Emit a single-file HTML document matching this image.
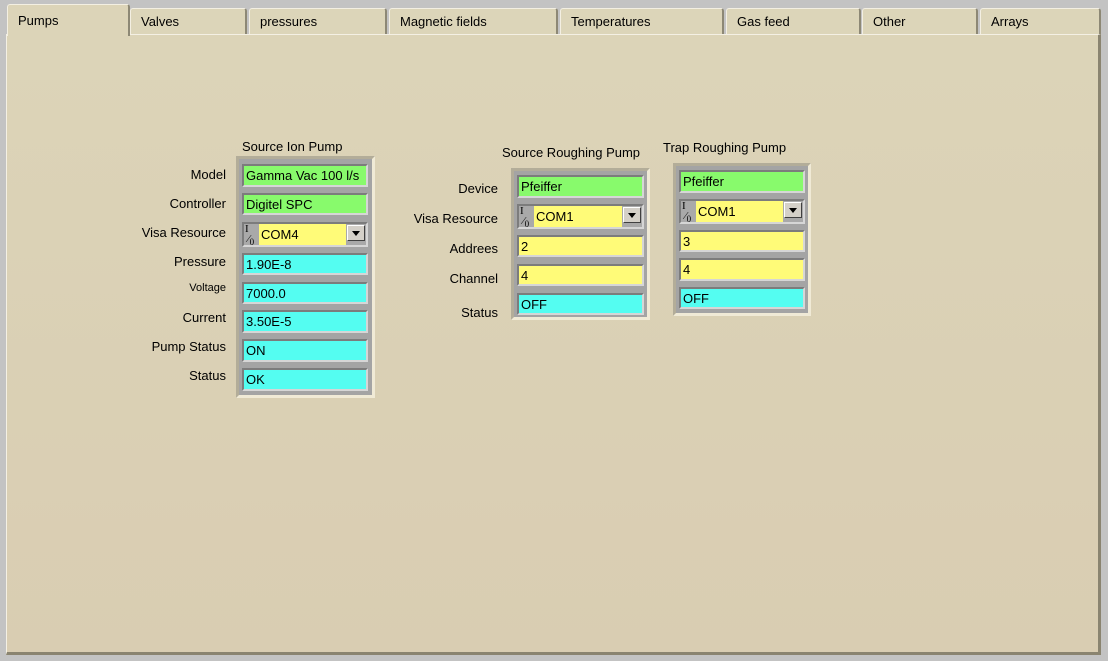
<!DOCTYPE html>
<html><head><style>
body{margin:0;width:1108px;height:661px;background:#c3c3c3;position:relative;overflow:hidden;font-family:"Liberation Sans",sans-serif;font-size:13px;color:#000}
.panel{position:absolute;left:6px;top:34px;width:1091px;height:617px;background:linear-gradient(180deg,#dcd4b8,#d9cdb2);border-top:1px solid #f4f0e4;border-left:1px solid #f4f0e4;border-right:3px solid #8a8470;border-bottom:3px solid #8a8470}
.tab{position:absolute;top:8px;height:26px;background:#dcd5b9;border:1px solid #f3efe2;border-right:2px solid #8d8875;border-bottom:none;border-radius:3px 3px 0 0;box-sizing:border-box;padding:5px 0 0 10px}
.tab.sel{top:4px;height:32px;background:#dcd4b8;padding-top:8px;z-index:2;border-bottom:none}
.lbl{position:absolute;text-align:right;width:120px}
.title{position:absolute}
.box{position:absolute;background:#a4a4a4;border:3px solid;border-color:#b3ad99 #f0ead6 #f0ead6 #b3ad99}
.f{position:absolute;box-sizing:border-box;border:2px solid;border-color:#7c7c7c #d6d6d6 #d6d6d6 #7c7c7c;padding:3px 0 0 2px;line-height:14px;white-space:nowrap}
.g{background:#88fa6c}.y{background:#fffb78}.c{background:#54fdf1}
.io{position:absolute;box-sizing:border-box;border:2px solid;border-color:#7c7c7c #d6d6d6 #d6d6d6 #7c7c7c;background:#a9a9a9}
.io .t{position:absolute;left:15px;top:0;bottom:0;right:20px;background:#fffb78;padding:3px 0 0 2px}
.io .s{position:absolute;left:1px;top:0;font-family:"Liberation Serif",serif;font-size:11px;line-height:10px}
.io .b{position:absolute;right:1px;top:1px;width:18px;height:16px;background:#d4d0c8;border:1px solid;border-color:#fff #404040 #404040 #fff;box-sizing:border-box}
.io .b:after{content:"";position:absolute;left:4px;top:5px;border-left:4px solid transparent;border-right:4px solid transparent;border-top:5px solid #000}
</style></head><body>
<div class="panel"></div>
<div class="tab sel" style="left:7px;width:123px">Pumps</div>
<div class="tab" style="left:130px;width:117px">Valves</div>
<div class="tab" style="left:249px;width:138px">pressures</div>
<div class="tab" style="left:389px;width:169px">Magnetic fields</div>
<div class="tab" style="left:560px;width:164px">Temperatures</div>
<div class="tab" style="left:726px;width:135px">Gas feed</div>
<div class="tab" style="left:862px;width:116px">Other</div>
<div class="tab" style="left:980px;width:121px">Arrays</div>

<div class="title" style="left:242px;top:139px">Source Ion Pump</div>
<div class="box" style="left:236px;top:156px;width:133px;height:236px"></div>
<div class="lbl" style="left:106px;top:167px">Model</div>
<div class="lbl" style="left:106px;top:196px">Controller</div>
<div class="lbl" style="left:106px;top:225px">Visa Resource</div>
<div class="lbl" style="left:106px;top:254px">Pressure</div>
<div class="lbl" style="left:106px;top:282px;font-size:11px">Voltage</div>
<div class="lbl" style="left:106px;top:310px">Current</div>
<div class="lbl" style="left:106px;top:339px">Pump Status</div>
<div class="lbl" style="left:106px;top:368px">Status</div>
<div class="f g" style="left:242px;top:164px;width:126px;height:23px">Gamma Vac 100 l/s</div>
<div class="f g" style="left:242px;top:193px;width:126px;height:22px">Digitel SPC</div>
<div class="io" style="left:242px;top:222px;width:126px;height:25px"><span class="s">I<br>&nbsp;⁄<sub style="font-size:9px">0</sub></span><div class="t">COM4</div><div class="b"></div></div>
<div class="f c" style="left:242px;top:253px;width:126px;height:22px">1.90E-8</div>
<div class="f c" style="left:242px;top:282px;width:126px;height:22px">7000.0</div>
<div class="f c" style="left:242px;top:310px;width:126px;height:23px">3.50E-5</div>
<div class="f c" style="left:242px;top:339px;width:126px;height:23px">ON</div>
<div class="f c" style="left:242px;top:368px;width:126px;height:23px">OK</div>

<div class="title" style="left:502px;top:145px">Source Roughing Pump</div>
<div class="box" style="left:511px;top:168px;width:133px;height:146px"></div>
<div class="lbl" style="left:378px;top:181px">Device</div>
<div class="lbl" style="left:378px;top:211px">Visa Resource</div>
<div class="lbl" style="left:378px;top:241px">Addrees</div>
<div class="lbl" style="left:378px;top:271px">Channel</div>
<div class="lbl" style="left:378px;top:305px">Status</div>
<div class="f g" style="left:517px;top:175px;width:127px;height:23px">Pfeiffer</div>
<div class="io" style="left:517px;top:204px;width:127px;height:25px"><span class="s">I<br>&nbsp;⁄<sub style="font-size:9px">0</sub></span><div class="t">COM1</div><div class="b"></div></div>
<div class="f y" style="left:517px;top:235px;width:127px;height:22px">2</div>
<div class="f y" style="left:517px;top:264px;width:127px;height:22px">4</div>
<div class="f c" style="left:517px;top:293px;width:127px;height:22px">OFF</div>

<div class="title" style="left:663px;top:140px">Trap Roughing Pump</div>
<div class="box" style="left:673px;top:163px;width:132px;height:147px"></div>
<div class="f g" style="left:679px;top:170px;width:126px;height:23px">Pfeiffer</div>
<div class="io" style="left:679px;top:199px;width:126px;height:25px"><span class="s">I<br>&nbsp;⁄<sub style="font-size:9px">0</sub></span><div class="t">COM1</div><div class="b"></div></div>
<div class="f y" style="left:679px;top:230px;width:126px;height:22px">3</div>
<div class="f y" style="left:679px;top:258px;width:126px;height:23px">4</div>
<div class="f c" style="left:679px;top:287px;width:126px;height:22px">OFF</div>
</body></html>
